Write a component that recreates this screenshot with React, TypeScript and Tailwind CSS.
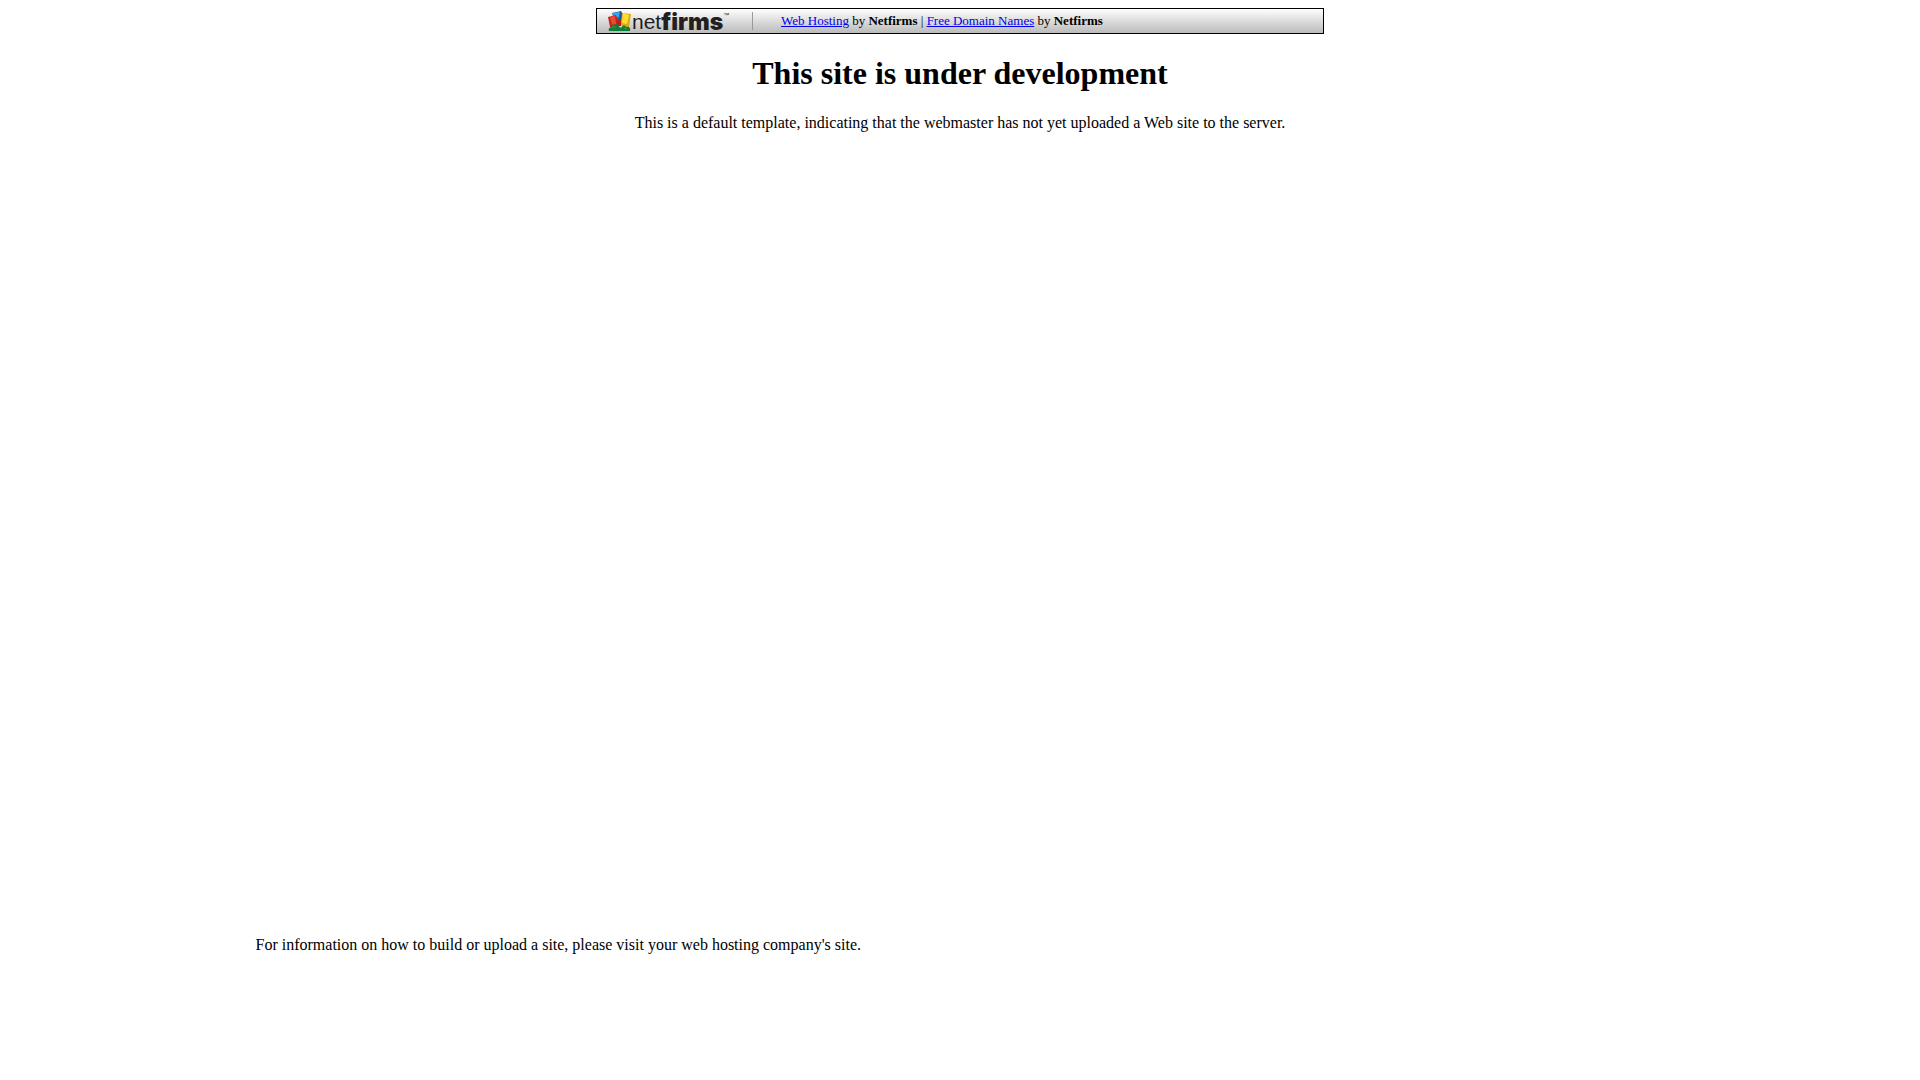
function NetfirmsLogo() {
  return (
    <a href="#netfirms" aria-label="Netfirms" className="flex h-6 text-[#231f20]">
      <svg width="24" height="24" viewBox="0 0 24 24" className="block shrink-0">
        {/* Buildings */}
        <path d="M4 4l9-2 2 3-2 10H7L5 7z" fill="#1769c0" />
        <path d="M5 4l7-1-1 5-5 1z" fill="#3fa4e8" />
        <path d="M12 2l2 3-1 8h-2z" fill="#1456a0" />
        <path d="M0 8l8-2 1 3v9H2z" fill="#c9241c" />
        <path d="M2 8l5-1 1 8-4 1z" fill="#e94b35" />
        <path d="M9 11l4-1v7H9z" fill="#b5221c" />
        <path d="M14 4l9 1-2 13h-7l-1-4z" fill="#e0a811" />
        <path d="M15 4l6 2-2 9-5-1z" fill="#ffdf2e" />
        {/* Trees */}
        <path
          d="M1 22c-1-2 0-3 2-4 0-2 2-3 4-2 1-2 3-1 4 1 0 2 2 2 3 1 1-2 3-2 4 0 3-1 5 1 4 4z"
          fill="#117d36"
        />
        <path d="M4 19c1-2 3-2 3 0m9 1c1-1 2-1 3 0" stroke="#3aa858" fill="none" />
      </svg>
      <span className="font-['Liberation_Sans',sans-serif] text-[21px] leading-[26px]">net</span>
      <span className="font-[Inter,sans-serif] text-[23px] leading-[26px] font-black">firms</span>
      <span className="font-['Liberation_Sans',sans-serif] text-[6px] leading-3">™</span>
    </a>
  );
}

export default function App() {
  return (
    <div className="min-h-screen bg-white p-2 font-['Liberation_Serif',serif] text-base text-black">
      {/* Hosting bar */}
      <header className="mx-auto flex h-[26px] w-full max-w-[728px] items-center border border-black bg-linear-to-b from-white to-[#bbbbbb]">
        <div className="w-[144px] pl-[11px]">
          <NetfirmsLogo />
        </div>
        <div className="ml-[11px] h-[18px] w-px bg-[#999999]" />
        <p className="ml-7 text-[13px] leading-4">
          <a href="#web-hosting" className="text-[#0000ee] underline">Web Hosting</a> by <b>Netfirms</b> |{' '}
          <a href="#domain-names" className="text-[#0000ee] underline">Free Domain Names</a> by <b>Netfirms</b>
        </p>
      </header>

      <main className="mx-auto w-[74%]">
        <div className="min-h-[902px] pt-5 text-center">
          <h1 className="text-[32px] leading-[38px] font-bold">This site is under development</h1>
          <p className="mt-[22px] leading-[18px]">
            This is a default template, indicating that the webmaster has not yet uploaded a Web site to the server.
          </p>
        </div>
        <p className="leading-[18px]">
          For information on how to build or upload a site, please visit your web hosting company's site.
        </p>
      </main>
    </div>
  );
}
